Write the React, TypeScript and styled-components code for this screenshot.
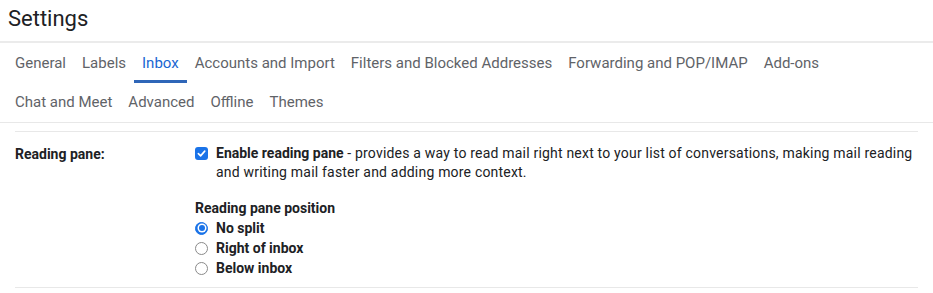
import React from "react";
import styled, { createGlobalStyle } from "styled-components";

const Global = createGlobalStyle`
  html, body { margin: 0; padding: 0; background: #fff; }
  body { font-family: Roboto, "Liberation Sans", Arial, sans-serif; color: #202124; }
`;

const Page = styled.div`
  width: 933px;
`;

const Title = styled.h1`
  margin: 0;
  height: 41px;
  padding-left: 8px;
  font-size: 22px;
  font-weight: 400;
  line-height: 38px;
  color: #202124;
  border-bottom: 2px solid #ebebeb;
`;

const TabBar = styled.div`
  padding-left: 7px;
  border-bottom: 1px solid #e8e8e8;
`;

const TabRow = styled.div<{ $h: number }>`
  display: flex;
  height: ${(p) => p.$h}px;
`;

const Tab = styled.div<{ $active?: boolean }>`
  padding: 2px 8px 0;
  height: 100%;
  box-sizing: border-box;
  display: flex;
  align-items: center;
  font-size: 15px;
  color: ${(p) => (p.$active ? "#1967d2" : "#5f6368")};
  border-bottom: 3px solid ${(p) => (p.$active ? "#2f66b8" : "transparent")};
`;

const Section = styled.div`
  margin: 8px 15px 0;
  border-top: 1px solid #e8e8e8;
  border-bottom: 1px solid #e8e8e8;
  padding: 12px 0 9px;
  display: grid;
  grid-template-columns: 180px 1fr;
  font-size: 14px;
  line-height: 20px;
`;

const Label = styled.div`
  font-weight: 700;
  color: #202124;
`;

const Content = styled.div`
  display: flex;
  flex-direction: column;
`;

const CheckLine = styled.div`
  display: flex;
  align-items: flex-start;
  gap: 8px;
`;

const Box = styled.span`
  flex: none;
  width: 13px;
  height: 13px;
  margin-top: 3px;
  border-radius: 3px;
  background: #1a73e8;
  display: flex;
  align-items: center;
  justify-content: center;
`;

const Desc = styled.div`
  color: #202124;
  line-height: 19px;
  letter-spacing: 0.2px;
  b { font-weight: 700; letter-spacing: 0; }
`;

const SubHead = styled.div`
  margin-top: 16px;
  font-weight: 700;
`;

const RadioLine = styled.label`
  display: flex;
  align-items: center;
  gap: 8px;
  font-weight: 700;
`;

const Radio = styled.span<{ $on?: boolean }>`
  flex: none;
  width: 13px;
  height: 13px;
  box-sizing: border-box;
  border-radius: 50%;
  border: 1px solid ${(p) => (p.$on ? "#1a73e8" : "#8a8a8a")};
  background: ${(p) => (p.$on ? "#1a73e8" : "#fff")};
  display: flex;
  align-items: center;
  justify-content: center;
  &::after {
    content: "";
    display: ${(p) => (p.$on ? "block" : "none")};
    width: 6px;
    height: 6px;
    border-radius: 50%;
    background: #1a73e8;
    box-shadow: 0 0 0 1.5px #fff;
  }
`;

const row1 = ["General", "Labels", "Inbox", "Accounts and Import", "Filters and Blocked Addresses", "Forwarding and POP/IMAP", "Add-ons"];
const row2 = ["Chat and Meet", "Advanced", "Offline", "Themes"];

export default function App() {
  return (
    <Page>
      <Global />
      <Title>Settings</Title>
      <TabBar>
        <TabRow $h={40}>
          {row1.map((t) => (
            <Tab key={t} $active={t === "Inbox"}>{t}</Tab>
          ))}
        </TabRow>
        <TabRow $h={39}>
          {row2.map((t) => (
            <Tab key={t}>{t}</Tab>
          ))}
        </TabRow>
      </TabBar>
      <Section>
        <Label>Reading pane:</Label>
        <Content>
          <CheckLine>
            <Box>
              <svg width="9" height="9" viewBox="0 0 10 10">
                <path d="M1.5 5.2 L4 7.6 L8.6 2.4" stroke="#fff" strokeWidth="1.8" fill="none" strokeLinecap="round" strokeLinejoin="round" />
              </svg>
            </Box>
            <Desc>
              <b>Enable reading pane</b> - provides a way to read mail right next to your list of conversations, making mail reading and writing mail faster and adding more context.
            </Desc>
          </CheckLine>
          <SubHead>Reading pane position</SubHead>
          <RadioLine><Radio $on />No split</RadioLine>
          <RadioLine><Radio />Right of inbox</RadioLine>
          <RadioLine><Radio />Below inbox</RadioLine>
        </Content>
      </Section>
    </Page>
  );
}
